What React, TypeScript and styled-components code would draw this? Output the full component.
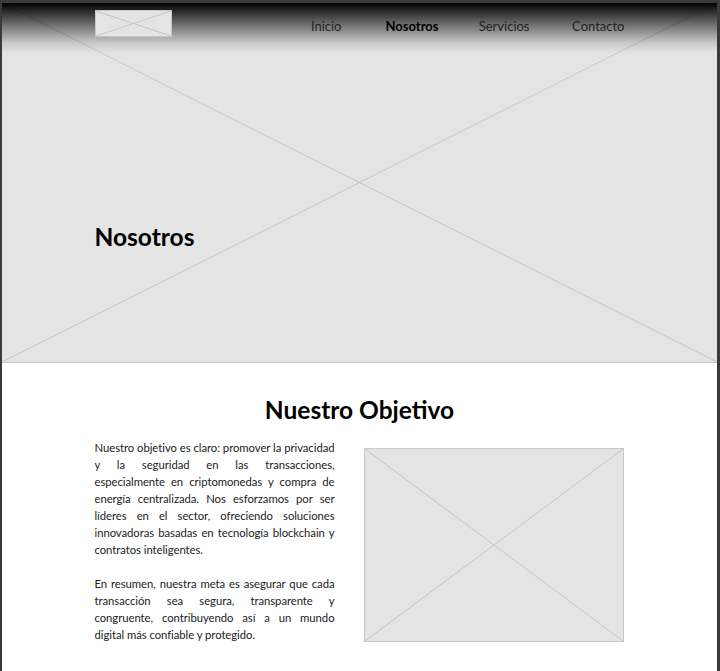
import React from "react";
import styled, { createGlobalStyle } from "styled-components";

const Global = createGlobalStyle`
  html, body { margin: 0; padding: 0; background: #ffffff; }
  body { font-family: "Lato", "Noto Sans", sans-serif; color: #222; }
  *, *::before, *::after { box-sizing: border-box; }
`;

const Frame = styled.div`
  width: 720px;
  min-height: 671px;
  border-style: solid;
  border-color: #3a3a3a;
  border-width: 3px 3px 0 2px;
  background: #fff;
`;

const Hero = styled.section`
  position: relative;
  height: 360px;
  background: #e4e4e4;
  border-bottom: 1px solid #c6c6c6;
  display: flex;
  flex-direction: column;
`;

const Cross = styled.svg`
  position: absolute;
  inset: 0;
  width: 100%;
  height: 100%;
  pointer-events: none;
`;

const Header = styled.header`
  position: relative;
  z-index: 1;
  height: 50px;
  background: linear-gradient(to bottom, #000 0%, rgba(0,0,0,0.55) 40%, rgba(0,0,0,0.12) 80%, rgba(0,0,0,0) 100%);
`;

const Container = styled.div`
  width: 530px;
  margin: 0 auto;
`;

const HeaderInner = styled(Container)`
  display: flex;
  align-items: flex-start;
  justify-content: space-between;
  padding-top: 7px;
`;

const Placeholder = styled.div<{ $w: number; $h: number }>`
  position: relative;
  width: ${(p) => p.$w}px;
  height: ${(p) => p.$h}px;
  background: #e4e4e4;
  border: 1px solid #c8c8c8;
  flex-shrink: 0;
`;

const Nav = styled.nav`
  display: flex;
  padding-top: 7px;
`;

const NavLink = styled.a<{ $active?: boolean; $w: number }>`
  width: ${(p) => p.$w}px;
  text-align: right;
  font-size: 13px;
  line-height: 18px;
  color: ${(p) => (p.$active ? "#000" : "#222")};
  font-weight: ${(p) => (p.$active ? 700 : 400)};
  text-decoration: none;
`;

const HeroTitle = styled.h1`
  position: relative;
  z-index: 1;
  margin: 170px 0 0;
  font-size: 24.5px;
  line-height: 28px;
  font-weight: 700;
  color: #000;
`;

const Section = styled.section`
  padding-top: 33px;
`;

const SectionTitle = styled.h2`
  margin: 0 0 15px;
  text-align: center;
  font-size: 24.5px;
  line-height: 28px;
  font-weight: 700;
  color: #000;
`;

const Row = styled(Container)`
  display: flex;
  justify-content: space-between;
  align-items: flex-start;
`;

const TextCol = styled.div`
  width: 240px;
`;

const Para = styled.p`
  margin: 0 0 17px;
  font-size: 11.3px;
  letter-spacing: -0.05px;
  line-height: 17px;
  color: #222;
`;

const Line = styled.span<{ $last?: boolean }>`
  display: block;
  white-space: nowrap;
  text-align: ${(p) => (p.$last ? "left" : "justify")};
  text-align-last: ${(p) => (p.$last ? "left" : "justify")};
`;

const ImageWrap = styled.div`
  padding-top: 9px;
  margin-right: 1px;
`;

const XLines = () => (
  <Cross viewBox="0 0 100 100" preserveAspectRatio="none">
    <line x1="0" y1="0" x2="100" y2="100" stroke="#c4c4c4" strokeWidth="1" vectorEffect="non-scaling-stroke" />
    <line x1="100" y1="0" x2="0" y2="100" stroke="#c4c4c4" strokeWidth="1" vectorEffect="non-scaling-stroke" />
  </Cross>
);

const paragraphs: string[][] = [
  [
    "Nuestro objetivo es claro: promover la privacidad",
    "y la seguridad en las transacciones,",
    "especialmente en criptomonedas y compra de",
    "energía centralizada. Nos esforzamos por ser",
    "líderes en el sector, ofreciendo soluciones",
    "innovadoras basadas en tecnología blockchain y",
    "contratos inteligentes.",
  ],
  [
    "En resumen, nuestra meta es asegurar que cada",
    "transacción sea segura, transparente y",
    "congruente, contribuyendo así a un mundo",
    "digital más confiable y protegido.",
  ],
];

export default function App() {
  return (
    <>
      <Global />
      <Frame>
        <Hero>
          <XLines />
          <Header>
            <HeaderInner>
              <Placeholder $w={77} $h={27}>
                <XLines />
              </Placeholder>
              <Nav>
                <NavLink $w={47}>Inicio</NavLink>
                <NavLink $w={97} $active>Nosotros</NavLink>
                <NavLink $w={91}>Servicios</NavLink>
                <NavLink $w={95}>Contacto</NavLink>
              </Nav>
            </HeaderInner>
          </Header>
          <Container>
            <HeroTitle>Nosotros</HeroTitle>
          </Container>
        </Hero>
        <Section>
          <SectionTitle>Nuestro Objetivo</SectionTitle>
          <Row>
            <TextCol>
              {paragraphs.map((lines, i) => (
                <Para key={i}>
                  {lines.map((l, j) => (
                    <Line key={j} $last={j === lines.length - 1}>
                      {l}
                    </Line>
                  ))}
                </Para>
              ))}
            </TextCol>
            <ImageWrap>
              <Placeholder $w={260} $h={194}>
                <XLines />
              </Placeholder>
            </ImageWrap>
          </Row>
        </Section>
      </Frame>
    </>
  );
}
